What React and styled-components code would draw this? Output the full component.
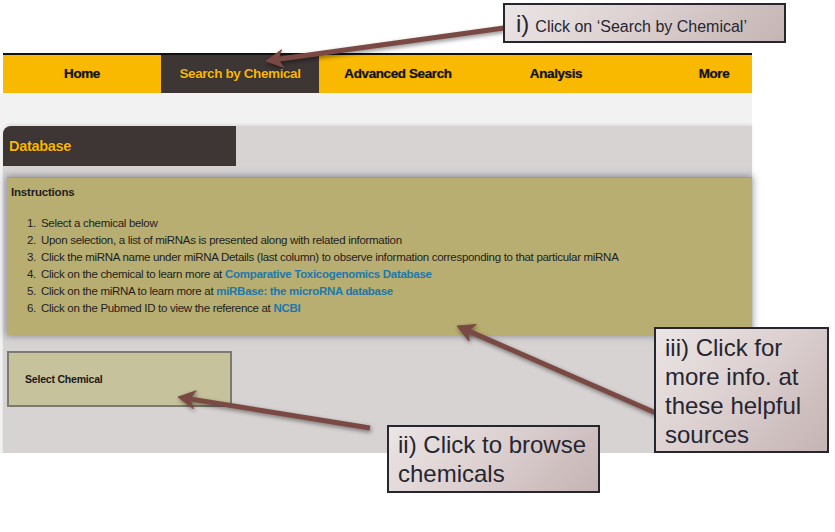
import React from 'react';
import styled, { createGlobalStyle } from 'styled-components';

const GlobalStyle = createGlobalStyle`
  html, body {
    margin: 0;
    padding: 0;
    background: #fff;
  }
  body {
    font-family: "Liberation Sans", Arial, sans-serif;
  }
`;

const Page = styled.div`
  position: relative;
  width: 835px;
  height: 532px;
  overflow: hidden;
  background: #fff;
`;

const Site = styled.div`
  width: 752px;
  padding-top: 53px;
`;

const Nav = styled.nav`
  margin-left: 3px;
  display: flex;
  height: 38px;
  border-top: 2px solid #111;
  background: #f8b900;
  overflow: hidden;
`;

const Tab = styled.div`
  flex: none;
  width: 158px;
  padding-bottom: 2px;
  box-sizing: border-box;
  display: flex;
  align-items: center;
  justify-content: center;
  font-weight: bold;
  font-size: 13.5px;
  letter-spacing: -0.4px;
  color: ${p => (p.$active ? '#f8b900' : '#161212')};
  background: ${p => (p.$active ? '#3e3535' : 'transparent')};
  text-shadow: 0 0 1px rgba(0, 0, 0, 0.45);
`;

const Body = styled.div`
  background: #f2f2f2;
  padding: 33px 0 0 3px;
`;

const Panel = styled.section`
  height: 327px;
  background: #d8d3d3;
  border-top-left-radius: 8px;
  box-shadow: 0 -2px 3px rgba(0, 0, 0, 0.08);
  display: flex;
  flex-direction: column;
`;

const PanelHeader = styled.h2`
  margin: 0;
  width: 227px;
  height: 40px;
  padding-left: 6px;
  display: flex;
  align-items: center;
  background: #3e3535;
  border-top-left-radius: 8px;
  font-size: 14.5px;
  letter-spacing: -0.3px;
  font-weight: bold;
  color: #f8b900;
  text-shadow: 0 0 1px rgba(0, 0, 0, 0.6);
`;

const Instructions = styled.div`
  margin: 11px 0 0 4px;
  height: 158px;
  box-sizing: border-box;
  padding: 7px 0 0 4px;
  background: #b8ae71;
  border-top: 1px solid #a9a062;
  box-shadow: 0 0 7px 1px rgba(70, 80, 100, 0.55);
  color: #1e1e1e;
`;

const InstructionsTitle = styled.h3`
  margin: 0 0 16px;
  font-size: 11.5px;
  letter-spacing: -0.2px;
  font-weight: bold;
  line-height: 14px;
`;

const Steps = styled.ol`
  margin: 0;
  padding: 0;
  list-style: none;
`;

const Step = styled.li`
  display: flex;
  font-size: 11.5px;
  letter-spacing: -0.3px;
  line-height: 17px;
`;

const StepNum = styled.span`
  width: 25px;
  margin-right: 5px;
  text-align: right;
`;

const Link = styled.a`
  color: #1c78ad;
  font-weight: bold;
  text-decoration: none;
  margin-left: 3px;
`;

const SelectBox = styled.div`
  margin: 16px 0 0 4px;
  width: 225px;
  height: 56px;
  box-sizing: border-box;
  padding-left: 16px;
  display: flex;
  align-items: center;
  background: #c6c29c;
  border: 2px solid #7b7b72;
  font-size: 10.5px;
  letter-spacing: -0.2px;
  font-weight: bold;
  color: #1a1a1a;
`;

const Callout = styled.div`
  position: absolute;
  left: ${p => p.$x}px;
  top: ${p => p.$y}px;
  width: ${p => p.$w}px;
  height: ${p => p.$h}px;
  box-sizing: border-box;
  padding: ${p => p.$pad};
  background: linear-gradient(135deg, #ebe5e5 0%, #ddd1d1 45%, #c5b4b4 100%);
  border: 2px solid #27262e;
  color: #262631;
  font-size: 24px;
  line-height: 29px;
`;

const Roman = styled.span`
  font-size: 24px;
  margin-right: 6px;
`;

const Small = styled.span`
  font-size: 16px;
`;

const Overlay = styled.svg`
  position: absolute;
  left: 0;
  top: 0;
  pointer-events: none;
  filter: drop-shadow(1px 2px 2px rgba(0, 0, 0, 0.45));
`;

const Arrow = ({ x1, y1, x2, y2 }) => {
  const dx = x2 - x1;
  const dy = y2 - y1;
  const len = Math.hypot(dx, dy);
  const ux = dx / len;
  const uy = dy / len;
  const nx = -uy;
  const ny = ux;
  const L = 17;
  const W = 9;
  const bx = x2 - ux * L;
  const by = y2 - uy * L;
  const head = [
    [x2, y2],
    [bx + nx * W, by + ny * W],
    [x2 - ux * L * 0.7, y2 - uy * L * 0.7],
    [bx - nx * W, by - ny * W],
  ]
    .map(p => p.join(','))
    .join(' ');
  return (
    <g fill="#7b4943" stroke="#7b4943">
      <line
        x1={x1}
        y1={y1}
        x2={x2 - ux * L * 0.6}
        y2={y2 - uy * L * 0.6}
        strokeWidth="5"
      />
      <polygon points={head} strokeWidth="1" strokeLinejoin="round" />
    </g>
  );
};

const tabs = ['Home', 'Search by Chemical', 'Advanced Search', 'Analysis', 'More'];

const steps = [
  ['Select a chemical below'],
  ['Upon selection, a list of miRNAs is presented along with related information'],
  ['Click the miRNA name under miRNA Details (last column) to observe information corresponding to that particular miRNA'],
  ['Click on the chemical to learn more at', 'Comparative Toxicogenomics Database'],
  ['Click on the miRNA to learn more at', 'miRBase: the microRNA database'],
  ['Click on the Pubmed ID to view the reference at', 'NCBI'],
];

const App = () => {
  return (
    <Page>
      <GlobalStyle />
      <Site>
        <Nav>
          {tabs.map(t => (
            <Tab key={t} $active={t === 'Search by Chemical'}>
              {t}
            </Tab>
          ))}
        </Nav>
        <Body>
          <Panel>
            <PanelHeader>Database</PanelHeader>
            <Instructions>
              <InstructionsTitle>Instructions</InstructionsTitle>
              <Steps>
                {steps.map(([text, link], i) => (
                  <Step key={i}>
                    <StepNum>{i + 1}.</StepNum>
                    <span>
                      {text}
                      {link && <Link href="#">{link}</Link>}
                    </span>
                  </Step>
                ))}
              </Steps>
            </Instructions>
            <SelectBox>Select Chemical</SelectBox>
          </Panel>
        </Body>
      </Site>

      <Overlay width="835" height="532">
        <Arrow x1={504} y1={28} x2={266} y2={61} />
        <Arrow x1={370} y1={428} x2={178} y2={397} />
        <Arrow x1={656} y1={413} x2={457} y2={326} />
      </Overlay>

      <Callout $x={503} $y={3} $w={283} $h={40} $pad="4px 0 0 11px">
        <Roman>i)</Roman>
        <Small>Click on ‘Search by Chemical’</Small>
      </Callout>
      <Callout $x={387} $y={425} $w={213} $h={68} $pad="3px 0 0 9px">
        ii) Click to browse
        <br />
        chemicals
      </Callout>
      <Callout $x={654} $y={327} $w={175} $h={126} $pad="4px 0 0 9px">
        iii) Click for
        <br />
        more info. at
        <br />
        these helpful
        <br />
        sources
      </Callout>
    </Page>
  );
};

export default App;
